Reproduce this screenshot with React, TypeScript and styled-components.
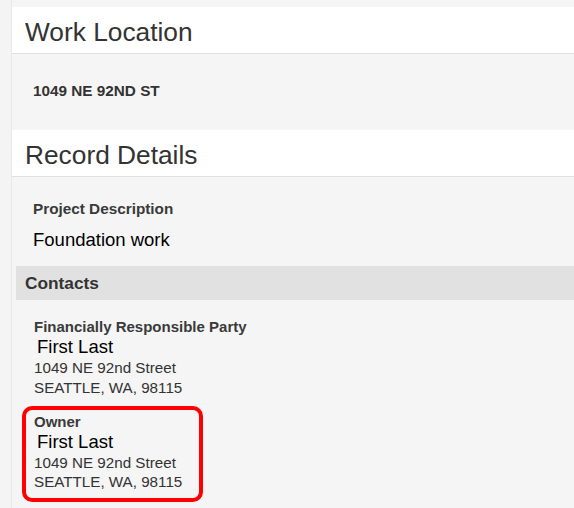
import styled, { createGlobalStyle } from "styled-components"

const GlobalStyle = createGlobalStyle`
  html, body {
    margin: 0;
    padding: 0;
    background: #f4f4f4;
    font-family: "Liberation Sans", Arial, sans-serif;
  }
`

const Page = styled.div`
  margin-left: 11px;
  border-left: 1px solid #e8e8e8;
  padding-top: 7px;
  min-height: 501px;
  background: #f5f5f5;
`

const SectionHeader = styled.div`
  background: #fff;
  border-bottom: 1px solid #e0e0e0;
  padding: 5px 13px 0;
  height: 41px;
`

const SectionTitle = styled.h2`
  margin: 0;
  font-size: 26.3px;
  line-height: 41px;
  font-weight: normal;
  color: #333;
`

const LocationBody = styled.div`
  padding: 27px 0 29px 21px;
`

const Address = styled.div`
  font-size: 15.3px;
  line-height: 20px;
  font-weight: bold;
  color: #333;
`

const RecordBody = styled.div`
  padding: 23px 0 0 4px;
`

const Field = styled.div`
  padding-left: 17px;
`

const FieldLabel = styled.div`
  font-size: 15.3px;
  line-height: 18px;
  font-weight: bold;
  color: #3a3a3a;
`

const FieldValue = styled.div`
  margin-top: 9.5px;
  font-size: 18.5px;
  line-height: 24px;
  color: #000;
`

const GroupBar = styled.div`
  margin-top: 14px;
  height: 34px;
  padding-left: 9px;
  background: #e1e1e1;
  font-size: 17.3px;
  line-height: 34px;
  font-weight: bold;
  color: #333;
`

const ContactList = styled.div`
  display: flex;
  flex-direction: column;
  gap: 15.5px;
  padding: 18.5px 0 0 18px;
`

const Contact = styled.div<{ $highlight?: boolean }>`
  position: relative;

  &::after {
    content: "";
    display: ${(p) => (p.$highlight ? "block" : "none")};
    position: absolute;
    left: -12px;
    top: -7px;
    bottom: -10px;
    width: 181px;
    box-sizing: border-box;
    border: 4px solid #ff0000;
    border-radius: 10px;
  }
`

const ContactRole = styled.div`
  font-size: 15px;
  line-height: 18px;
  font-weight: bold;
  color: #3a3a3a;
`

const ContactName = styled.div`
  padding-left: 3px;
  font-size: 18.5px;
  line-height: 22px;
  color: #000;
`

const ContactLine = styled.div`
  font-size: 15.2px;
  line-height: 19.5px;
  color: #333;
`

const contacts = [
  { role: "Financially Responsible Party", name: "First Last", highlight: false },
  { role: "Owner", name: "First Last", highlight: true },
]

export default function App() {
  return (
    <>
      <GlobalStyle />
      <Page>
        <SectionHeader>
          <SectionTitle>Work Location</SectionTitle>
        </SectionHeader>
        <LocationBody>
          <Address>1049 NE 92ND ST</Address>
        </LocationBody>

        <SectionHeader>
          <SectionTitle>Record Details</SectionTitle>
        </SectionHeader>
        <RecordBody>
          <Field>
            <FieldLabel>Project Description</FieldLabel>
            <FieldValue>Foundation work</FieldValue>
          </Field>

          <GroupBar>Contacts</GroupBar>
          <ContactList>
            {contacts.map((c) => (
              <Contact key={c.role} $highlight={c.highlight}>
                <ContactRole>{c.role}</ContactRole>
                <ContactName>{c.name}</ContactName>
                <ContactLine>1049 NE 92nd Street</ContactLine>
                <ContactLine>SEATTLE, WA, 98115</ContactLine>
              </Contact>
            ))}
          </ContactList>
        </RecordBody>
      </Page>
    </>
  )
}
